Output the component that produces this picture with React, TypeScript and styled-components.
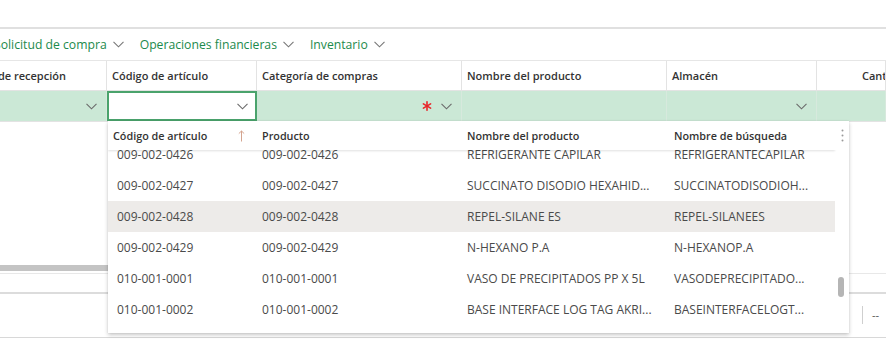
import React from "react";
import styled, { createGlobalStyle } from "styled-components";

const GlobalStyle = createGlobalStyle`
  html, body { margin: 0; padding: 0; background: #fff; }
  body { font-family: "Segoe UI", "Open Sans", "Noto Sans", sans-serif; overflow: hidden; }
  * { box-sizing: border-box; }
`;

const Page = styled.div`
  position: relative;
  width: 886px;
  height: 350px;
  overflow: hidden;
  background: #fff;
`;

const TopBar = styled.div`
  height: 29px;
  border-bottom: 2px solid #e0e0e0;
`;

const Toolbar = styled.div`
  display: flex;
  align-items: center;
  height: 32px;
  margin-left: -6px;
  border-bottom: 1px solid #e6e6e6;
  gap: 16px;
`;

const MenuItem = styled.div`
  display: flex;
  align-items: center;
  gap: 6px;
  color: #1c8a4c;
  font-size: 12.2px;
  white-space: nowrap;
`;

const Grid = styled.div`
  margin-left: -41px;
`;

const Row = styled.div<{ $h: number; $bg?: string }>`
  display: flex;
  height: ${(p) => p.$h}px;
  background: ${(p) => p.$bg || "transparent"};
  border-bottom: 1px solid #e3e3e3;
`;

const HeadCell = styled.div<{ $w?: number; $pl?: number }>`
  flex: ${(p) => (p.$w ? `0 0 ${p.$w}px` : "1 1 auto")};
  display: flex;
  align-items: center;
  padding-left: ${(p) => p.$pl ?? 5}px;
  border-right: 1px solid #e3e3e3;
  font-size: 11px;
  font-weight: 600;
  color: #333;
  white-space: nowrap;
  overflow: hidden;
`;

const FilterCell = styled.div<{ $w?: number; $active?: boolean }>`
  flex: ${(p) => (p.$w ? `0 0 ${p.$w}px` : "1 1 auto")};
  display: flex;
  align-items: center;
  justify-content: flex-end;
  gap: 9px;
  padding-right: 9px;
  border-right: 1px solid ${(p) => (p.$active ? "transparent" : "#d7e9dd")};
  ${(p) =>
    p.$active
      ? `background:#fff; border:2px solid #4aa36c; padding-right:7px; margin-top:0;`
      : ""}
`;

const Body = styled.div`
  display: flex;
  flex-direction: column;
  height: 229px;
`;

const EmptyArea = styled.div`
  height: 143px;
`;

const HScroll = styled.div`
  height: 6px;
  width: 420px;
  background: #c4c4c4;
`;

const FooterBand = styled.div`
  height: 21px;
  border-top: 1px solid #e8e8e8;
  border-bottom: 2px solid #dcdcdc;
  margin-top: 2px;
`;

const FooterRow = styled.div`
  height: 44px;
  display: flex;
  justify-content: flex-end;
  align-items: center;
  border-bottom: 1px solid #d8d8d8;
  padding-bottom: 2px;
`;

const FooterCell = styled.div`
  width: 24px;
  height: 18px;
  border-left: 1px solid #cfcfcf;
  font-size: 11px;
  color: #555;
  display: flex;
  align-items: center;
  padding-left: 9px;
`;

const Dropdown = styled.div`
  position: absolute;
  left: 108px;
  top: 121px;
  width: 741px;
  height: 212px;
  background: #fff;
  box-shadow: 0 1.5px 4px rgba(0, 0, 0, 0.22), 0 0 1px rgba(0, 0, 0, 0.12);
  display: flex;
  flex-direction: column;
  overflow: hidden;
`;

const DDHeader = styled.div`
  display: flex;
  height: 29px;
  flex: 0 0 29px;
  position: relative;
  z-index: 1;
  background: #fff;
  box-shadow: 0 1px 2px rgba(0, 0, 0, 0.12);
  margin-right: 14px;
`;

const DDHeadCell = styled.div<{ $w: number; $pl: number }>`
  flex: 0 0 ${(p) => p.$w}px;
  display: flex;
  align-items: center;
  justify-content: space-between;
  padding-left: ${(p) => p.$pl}px;
  padding-right: 12px;
  font-size: 10.8px;
  font-weight: 600;
  color: #333;
  white-space: nowrap;
`;

const DDMenu = styled.div`
  position: absolute;
  right: -14px;
  top: 0;
  width: 14px;
  height: 29px;
  display: flex;
  align-items: center;
  justify-content: center;
  background: #fff;
`;

const DDBody = styled.div`
  flex: 1;
  display: flex;
  overflow: hidden;
`;

const DDList = styled.div`
  flex: 0 0 727px;
  margin-top: -11px;
`;

const DDRow = styled.div<{ $sel?: boolean }>`
  display: flex;
  height: 31px;
  align-items: center;
  background: ${(p) => (p.$sel ? "#edebe9" : "transparent")};
`;

const DDCell = styled.div<{ $w: number; $pl: number }>`
  flex: 0 0 ${(p) => p.$w}px;
  padding-left: ${(p) => p.$pl}px;
  font-size: 12px;
  color: #4a4a4a;
  white-space: nowrap;
  overflow: hidden;
`;

const VTrack = styled.div`
  flex: 0 0 14px;
  position: relative;
`;

const VThumb = styled.div`
  position: absolute;
  left: 3px;
  top: 127px;
  width: 6px;
  height: 20px;
  border-radius: 3px;
  background: #b5b5b5;
`;

const Chevron = ({ color = "#6b6b6b" }: { color?: string }) => (
  <svg width="11" height="7" viewBox="0 0 11 7">
    <polyline points="0.5,0.8 5.5,5.8 10.5,0.8" fill="none" stroke={color} strokeWidth="1.1" />
  </svg>
);

const Asterisk = () => (
  <svg width="10" height="10" viewBox="0 0 10 10">
    <g stroke="#e8252a" strokeWidth="1.6" strokeLinecap="round">
      <line x1="5" y1="0.8" x2="5" y2="9.2" />
      <line x1="1.4" y1="2.9" x2="8.6" y2="7.1" />
      <line x1="1.4" y1="7.1" x2="8.6" y2="2.9" />
    </g>
  </svg>
);

const SortUp = () => (
  <svg width="7" height="12" viewBox="0 0 7 12">
    <g stroke="#d4a48f" strokeWidth="1" fill="none">
      <line x1="3.5" y1="1" x2="3.5" y2="11.5" />
      <polyline points="0.8,3.6 3.5,1 6.2,3.6" />
    </g>
  </svg>
);

const Dots = () => (
  <svg width="3" height="13" viewBox="0 0 3 13">
    <g fill="#999">
      <circle cx="1.5" cy="1.5" r="1" />
      <circle cx="1.5" cy="6.5" r="1" />
      <circle cx="1.5" cy="11.5" r="1" />
    </g>
  </svg>
);

const rows = [
  ["009-002-0426", "009-002-0426", "REFRIGERANTE CAPILAR", "REFRIGERANTECAPILAR"],
  ["009-002-0427", "009-002-0427", "SUCCINATO DISODIO HEXAHID...", "SUCCINATODISODIOH..."],
  ["009-002-0428", "009-002-0428", "REPEL-SILANE ES", "REPEL-SILANEES"],
  ["009-002-0429", "009-002-0429", "N-HEXANO P.A", "N-HEXANOP.A"],
  ["010-001-0001", "010-001-0001", "VASO DE PRECIPITADOS PP X 5L", "VASODEPRECIPITADO..."],
  ["010-001-0002", "010-001-0002", "BASE INTERFACE LOG TAG AKRI...", "BASEINTERFACELOGT..."],
];

const ddCols = [
  { w: 149, pl: 9 },
  { w: 205, pl: 5 },
  { w: 206, pl: 5 },
  { w: 167, pl: 6 },
];

export default function App() {
  return (
    <Page>
      <GlobalStyle />
      <TopBar />
      <Toolbar>
        <MenuItem>
          Solicitud de compra <Chevron color="#777" />
        </MenuItem>
        <MenuItem>
          Operaciones financieras <Chevron color="#777" />
        </MenuItem>
        <MenuItem>
          Inventario <Chevron color="#777" />
        </MenuItem>
      </Toolbar>
      <Grid>
        <Row $h={30}>
          <HeadCell $w={148}>Fecha de recepción</HeadCell>
          <HeadCell $w={150}>Código de artículo</HeadCell>
          <HeadCell $w={205}>Categoría de compras</HeadCell>
          <HeadCell $w={205}>Nombre del producto</HeadCell>
          <HeadCell $w={150}>Almacén</HeadCell>
          <HeadCell $pl={45}>Cantidad</HeadCell>
        </Row>
        <Row $h={31} $bg="#cbe8d6">
          <FilterCell $w={148}>
            <Chevron />
          </FilterCell>
          <FilterCell $w={150} $active>
            <Chevron />
          </FilterCell>
          <FilterCell $w={205}>
            <Asterisk />
            <Chevron />
          </FilterCell>
          <FilterCell $w={205} />
          <FilterCell $w={150}>
            <Chevron />
          </FilterCell>
          <FilterCell />
        </Row>
      </Grid>
      <Body>
        <EmptyArea />
        <HScroll />
        <FooterBand />
        <FooterRow>
          <FooterCell>--</FooterCell>
        </FooterRow>
      </Body>
      <Dropdown>
        <DDHeader>
          <DDHeadCell $w={149} $pl={5}>
            Código de artículo <SortUp />
          </DDHeadCell>
          <DDHeadCell $w={205} $pl={5}>Producto</DDHeadCell>
          <DDHeadCell $w={206} $pl={5}>Nombre del producto</DDHeadCell>
          <DDHeadCell $w={167} $pl={6}>Nombre de búsqueda</DDHeadCell>
          <DDMenu>
            <Dots />
          </DDMenu>
        </DDHeader>
        <DDBody>
          <DDList>
            {rows.map((r, i) => (
              <DDRow key={i} $sel={i === 2}>
                {r.map((t, j) => (
                  <DDCell key={j} $w={ddCols[j].w} $pl={ddCols[j].pl}>
                    {t}
                  </DDCell>
                ))}
              </DDRow>
            ))}
          </DDList>
          <VTrack>
            <VThumb />
          </VTrack>
        </DDBody>
      </Dropdown>
    </Page>
  );
}
